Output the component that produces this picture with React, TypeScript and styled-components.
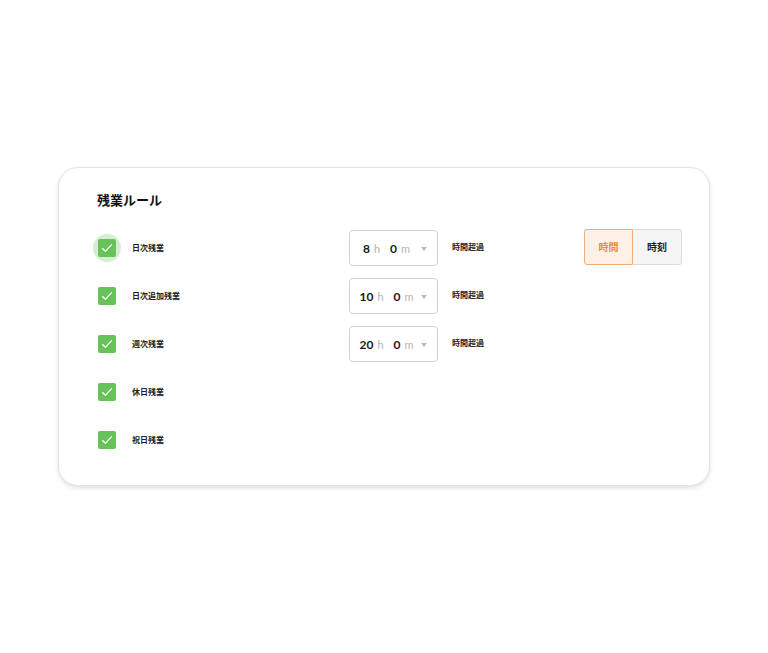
import React from "react";
import styled, { createGlobalStyle } from "styled-components";

const GlobalStyle = createGlobalStyle`
    html, body {
        margin: 0;
        padding: 0;
        background: #ffffff;
    }
    body {
        font-family: "Lato", "Noto Sans CJK JP", sans-serif;
        color: #222;
    }
`;

const Page = styled.div`
    width: 768px;
    height: 653px;
    box-sizing: border-box;
    padding: 167px 58px 0 58px;
`;

const Card = styled.section`
    box-sizing: border-box;
    width: 652px;
    border: 1px solid #e2e2e2;
    border-radius: 20px;
    box-shadow: 0 2px 4px rgba(0, 0, 0, 0.12);
    background: #fff;
    padding: 22px 27px 27px 39px;
`;

const Title = styled.h2`
    margin: 0 0 20px -1px;
    font-size: 13px;
    line-height: 20px;
    font-weight: 700;
    color: #111;
`;

const Rows = styled.div`
    display: flex;
    flex-direction: column;
    gap: 12px;
`;

const Row = styled.div`
    display: grid;
    grid-template-columns: 34px 217px 103px 132px 98px;
    height: 36px;
    align-items: center;
`;

const CheckBox = styled.span<{ $focused?: boolean }>`
    position: relative;
    display: flex;
    align-items: center;
    justify-content: center;
    width: 18px;
    height: 18px;
    border-radius: 2px;
    background: #67c25a;

    &::before {
        content: "";
        display: ${(p) => (p.$focused ? "block" : "none")};
        position: absolute;
        left: -5px;
        top: -5px;
        width: 28px;
        height: 28px;
        border-radius: 50%;
        background: rgba(103, 194, 90, 0.28);
    }

    svg {
        position: relative;
    }
`;

const Label = styled.span`
    font-size: 8px;
    font-weight: 700;
    color: #222;
    white-space: nowrap;
    margin-top: -2px;
`;

const Select = styled.div`
    box-sizing: border-box;
    display: flex;
    align-items: center;
    width: 89px;
    height: 36px;
    padding: 0 10px 0 6px;
    border: 1px solid #d2d2d2;
    border-radius: 4px;
    background: #fff;
`;

const Value = styled.div`
    flex: 1;
    display: flex;
    align-items: baseline;
    justify-content: center;
    margin-right: 4px;
`;

const Num = styled.span`
    font-size: 12px;
    font-weight: 700;
    color: #1a1a1a;
`;

const Unit = styled.span`
    font-size: 11px;
    color: #b4b4b4;
    margin: 0 10px 0 4px;

    &:last-child {
        margin-right: 0;
    }
`;

const Arrow = styled.span`
    width: 0;
    height: 0;
    border-left: 3px solid transparent;
    border-right: 3px solid transparent;
    border-top: 4px solid #b8b8b8;
    margin-top: 2px;
`;

const Note = styled.span`
    font-size: 8px;
    font-weight: 700;
    color: #222;
    white-space: nowrap;
    margin-top: -3px;
`;

const Toggle = styled.div`
    display: flex;
    margin-top: -3px;
`;

const ToggleButton = styled.button<{ $active?: boolean }>`
    box-sizing: border-box;
    width: 49px;
    height: 36px;
    padding: 0;
    font-family: inherit;
    font-size: 10px;
    font-weight: 700;
    cursor: pointer;
    color: ${(p) => (p.$active ? "#ee8a3e" : "#1e1e1e")};
    background: ${(p) => (p.$active ? "#fdf0e5" : "#f5f5f5")};
    border: 1px solid ${(p) => (p.$active ? "#f0ad78" : "#dcdcdc")};
    border-width: ${(p) => (p.$active ? "1.5px" : "1px")};

    &:first-child {
        border-radius: 3px 0 0 3px;
    }
    &:last-child {
        border-radius: 0 3px 3px 0;
        border-left: none;
    }
`;

const Check = () => (
    <svg width="12" height="10" viewBox="0 0 12 10">
        <path d="M1.2 5.2 L4.4 8.3 L10.8 1.4" fill="none" stroke="#fff" strokeWidth="1.2" />
    </svg>
);

interface Rule {
    label: string;
    hours?: number;
    focused?: boolean;
}

const rules: Rule[] = [
    { label: "日次残業", hours: 8, focused: true },
    { label: "日次追加残業", hours: 10 },
    { label: "週次残業", hours: 20 },
    { label: "休日残業" },
    { label: "祝日残業" },
];

const App: React.FC = () => {
    return (
        <Page>
            <GlobalStyle />
            <Card>
                <Title>残業ルール</Title>
                <Rows>
                    {rules.map((rule, i) => (
                        <Row key={rule.label}>
                            <CheckBox $focused={rule.focused}>
                                <Check />
                            </CheckBox>
                            <Label>{rule.label}</Label>
                            {rule.hours !== undefined ? (
                                <>
                                    <Select>
                                        <Value>
                                            <Num>{rule.hours}</Num>
                                            <Unit>h</Unit>
                                            <Num>0</Num>
                                            <Unit>m</Unit>
                                        </Value>
                                        <Arrow />
                                    </Select>
                                    <Note>時間超過</Note>
                                </>
                            ) : (
                                <>
                                    <span />
                                    <span />
                                </>
                            )}
                            {i === 0 ? (
                                <Toggle>
                                    <ToggleButton $active>時間</ToggleButton>
                                    <ToggleButton>時刻</ToggleButton>
                                </Toggle>
                            ) : (
                                <span />
                            )}
                        </Row>
                    ))}
                </Rows>
            </Card>
        </Page>
    );
};

export default App;
